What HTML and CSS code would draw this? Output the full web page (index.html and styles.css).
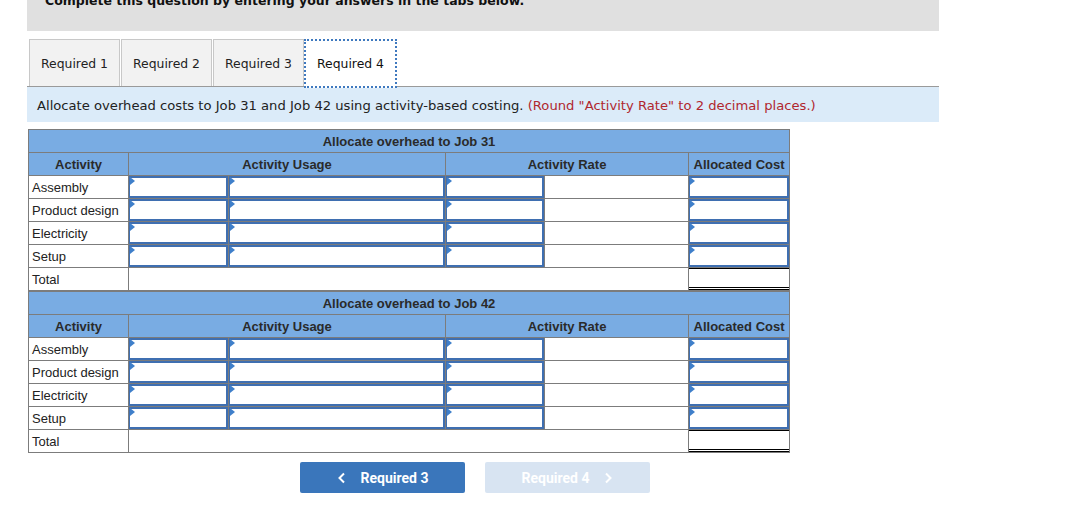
FILE: index.html
```html
<!DOCTYPE html>
<html>
<head>
<meta charset="utf-8">
<link rel="stylesheet" href="styles.css">
</head>
<body>
<div class="page">
  <div class="banner"><p class="banner-text">Complete this question by entering your answers in the tabs below.</p></div>

  <div class="tabs">
    <div class="tab">Required 1</div>
    <div class="tab">Required 2</div>
    <div class="tab">Required 3</div>
    <div class="tab active">Required 4</div>
  </div>

  <div class="info">Allocate overhead costs to Job 31 and Job 42 using activity-based costing. <span class="note">(Round "Activity Rate" to 2 decimal places.)</span></div>

  <table class="grid first">
    <colgroup>
      <col class="c1"><col class="c2"><col class="c3"><col class="c4"><col class="c5"><col class="c6">
    </colgroup>
    <tr class="title"><th colspan="6">Allocate overhead to Job 31</th></tr>
    <tr class="head"><th>Activity</th><th colspan="2">Activity Usage</th><th colspan="2">Activity Rate</th><th>Allocated Cost</th></tr>
    <tr><td class="lbl">Assembly</td><td><div class="inp"></div></td><td><div class="inp"></div></td><td><div class="inp"></div></td><td></td><td><div class="inp"></div></td></tr>
    <tr><td class="lbl">Product design</td><td><div class="inp"></div></td><td><div class="inp"></div></td><td><div class="inp"></div></td><td></td><td><div class="inp"></div></td></tr>
    <tr><td class="lbl">Electricity</td><td><div class="inp"></div></td><td><div class="inp"></div></td><td><div class="inp"></div></td><td></td><td><div class="inp"></div></td></tr>
    <tr><td class="lbl">Setup</td><td><div class="inp"></div></td><td><div class="inp"></div></td><td><div class="inp"></div></td><td></td><td><div class="inp"></div></td></tr>
    <tr><td class="lbl">Total</td><td colspan="4"></td><td><div class="tot"></div></td></tr>
  </table>

  <table class="grid">
    <colgroup>
      <col class="c1"><col class="c2"><col class="c3"><col class="c4"><col class="c5"><col class="c6">
    </colgroup>
    <tr class="title"><th colspan="6">Allocate overhead to Job 42</th></tr>
    <tr class="head"><th>Activity</th><th colspan="2">Activity Usage</th><th colspan="2">Activity Rate</th><th>Allocated Cost</th></tr>
    <tr><td class="lbl">Assembly</td><td><div class="inp"></div></td><td><div class="inp"></div></td><td><div class="inp"></div></td><td></td><td><div class="inp"></div></td></tr>
    <tr><td class="lbl">Product design</td><td><div class="inp"></div></td><td><div class="inp"></div></td><td><div class="inp"></div></td><td></td><td><div class="inp"></div></td></tr>
    <tr><td class="lbl">Electricity</td><td><div class="inp"></div></td><td><div class="inp"></div></td><td><div class="inp"></div></td><td></td><td><div class="inp"></div></td></tr>
    <tr><td class="lbl">Setup</td><td><div class="inp"></div></td><td><div class="inp"></div></td><td><div class="inp"></div></td><td></td><td><div class="inp"></div></td></tr>
    <tr><td class="lbl">Total</td><td colspan="4"></td><td><div class="tot"></div></td></tr>
  </table>

  <div class="nav">
    <button class="btn prev"><svg width="10" height="12" viewBox="0 0 10 12"><path d="M7 1.5 L2.5 6 L7 10.5" fill="none" stroke="#fff" stroke-width="2"/></svg><span>Required 3</span></button>
    <button class="btn next"><span>Required 4</span><svg width="10" height="12" viewBox="0 0 10 12"><path d="M3 1.5 L7.5 6 L3 10.5" fill="none" stroke="#fff" stroke-width="2"/></svg></button>
  </div>
</div>
</body>
</html>
```
FILE: styles.css
```css
html, body {
  margin: 0;
  padding: 0;
  background: #fff;
}

.page {
  margin-left: 27px;
  width: 912px;
  font-family: "DejaVu Sans", Verdana, sans-serif;
  color: #222;
}

.banner {
  height: 31px;
  background: #e0e0e0;
  overflow: hidden;
}

.banner-text {
  margin: -6px 0 0 18px;
  font-size: 12.5px;
  font-weight: bold;
  line-height: 14px;
  color: #111;
}

.tabs {
  display: flex;
  gap: 1px;
  padding-left: 2px;
  margin-top: 8px;
  height: 47px;
}

.tab {
  width: 89px;
  height: 46px;
  border: 1px solid #c8c8c8;
  border-bottom: none;
  background: #f2f2f2;
  font-size: 12.4px;
  display: flex;
  align-items: center;
  justify-content: center;
  color: #222;
}

.tab.active {
  width: 89px;
  height: 45px;
  margin-left: -1px;
  background: #fff;
  border: 2px dotted #3f79bf;
  position: relative;
  z-index: 1;
  color: #111;
}

.info {
  border-top: 1px solid #9a9a9a;
  background: #dbebf9;
  height: 35px;
  line-height: 37px;
  padding-left: 10px;
  font-size: 13.15px;
  color: #222;
}

.note {
  color: #b0272e;
}

.grid {
  border-collapse: collapse;
  table-layout: fixed;
  width: 761px;
  margin-left: 1px;
  font-family: "Liberation Sans", Arial, sans-serif;
  font-size: 13px;
  color: #222;
}

.grid.first {
  margin-top: 7px;
}

.c1 { width: 100px; }
.c2 { width: 100px; }
.c3 { width: 217px; }
.c4 { width: 99px; }
.c5 { width: 144px; }
.c6 { width: 101px; }

.grid th,
.grid td {
  border: 1px solid #7c7c7c;
  height: 22px;
  padding: 0;
  box-sizing: border-box;
}

.grid tr {
  height: 23px;
}

.grid th {
  background: #79ace3;
  font-weight: bold;
  color: #2a2a2a;
  text-align: center;
}

.grid td.lbl {
  padding-left: 3px;
  text-align: left;
}

.inp {
  position: relative;
  height: 22px;
  box-sizing: border-box;
  border: 2px solid #3f6fb1;
  border-left-width: 1px;
  background: #fff;
}

.inp::before {
  content: "";
  position: absolute;
  top: -1px;
  left: 0;
  border-left: 5px solid #3f7fca;
  border-top: 4px solid transparent;
  border-bottom: 4px solid transparent;
}

.tot {
  height: 22px;
  box-sizing: border-box;
  border-top: 1px solid #000;
  border-bottom: 3px double #000;
}

.nav {
  display: flex;
  gap: 20px;
  margin-top: 9px;
  padding-left: 273px;
}

.btn {
  width: 165px;
  height: 31px;
  border: none;
  border-radius: 2px;
  font-family: Roboto, "Liberation Sans", Arial, sans-serif;
  font-size: 14px;
  font-weight: bold;
  color: #fff;
  display: flex;
  align-items: center;
  justify-content: center;
  gap: 14px;
  padding: 0;
}

.btn.prev {
  background: #3a76bb;
}

.btn.next {
  background: #d8e4f2;
}
```
